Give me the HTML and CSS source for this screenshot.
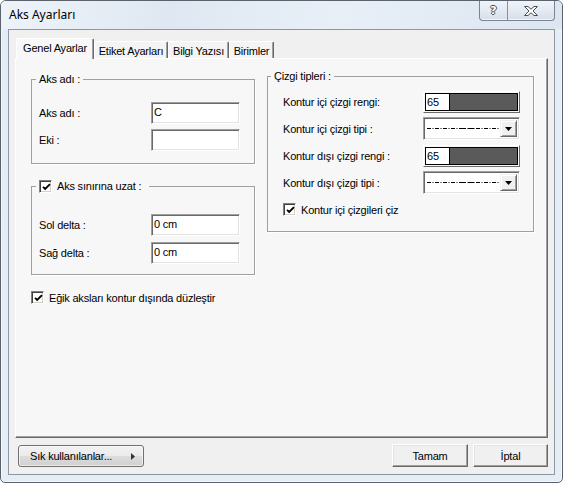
FILE: index.html
```html
<!DOCTYPE html>
<html lang="tr">
<head>
<meta charset="utf-8">
<title>Aks Ayarları</title>
<link rel="stylesheet" href="styles.css">
</head>
<body>
<div class="window">
  <div class="titlebar">
    <span class="title">Aks Ayarları</span>
    <div class="caption-btns">
      <span class="cap-btn help">?</span>
      <span class="cap-btn close">
        <svg width="16" height="10" viewBox="0 0 16 10"><path d="M1.5 0.5 H5 L8 3.2 L11 0.5 H14.5 L10 5 L14.5 9.5 H11 L8 6.8 L5 9.5 H1.5 L6 5 Z" fill="#fdfdfd" stroke="#4a4f57" stroke-width="1" stroke-linejoin="round"/></svg>
      </span>
    </div>
  </div>
  <div class="client">
    <div class="tabs">
      <div class="tab active t1">Genel Ayarlar</div>
      <div class="tab t2">Etiket Ayarları</div>
      <div class="tab t3">Bilgi Yazısı</div>
      <div class="tab t4">Birimler</div>
    </div>
    <div class="panel">
      <div class="col-left">
        <fieldset class="group g1">
          <legend>Aks adı :</legend>
          <div class="form-grid g-left">
            <span class="lbl">Aks adı :</span>
            <div class="input">C</div>
            <span class="lbl">Eki :</span>
            <div class="input"></div>
          </div>
        </fieldset>
        <fieldset class="group g2">
          <legend class="legend-chk"><span class="chk"><svg width="9" height="9" viewBox="0 0 9 9"><polyline points="1,3.8 3.2,6 8,1.2" fill="none" stroke="#000" stroke-width="1.9"/></svg></span><span>Aks sınırına uzat :</span></legend>
          <div class="form-grid g-left rows6">
            <span class="lbl">Sol delta :</span>
            <div class="input">0 cm</div>
            <span class="lbl">Sağ delta :</span>
            <div class="input">0 cm</div>
          </div>
        </fieldset>
        <div class="chk-row egik">
          <span class="chk"><svg width="9" height="9" viewBox="0 0 9 9"><polyline points="1,3.8 3.2,6 8,1.2" fill="none" stroke="#000" stroke-width="1.9"/></svg></span>
          <span>Eğik aksları kontur dışında düzleştir</span>
        </div>
      </div>
      <div class="col-right">
        <fieldset class="group g3">
          <legend>Çizgi tipleri :</legend>
          <div class="form-grid g-right">
            <span class="lbl">Kontur içi çizgi rengi:</span>
            <div class="color"><div class="color-in"><span class="color-txt">65</span><span class="swatch"></span></div></div>
            <span class="lbl">Kontur içi çizgi tipi :</span>
            <div class="combo">
              <span class="combo-val"><svg width="72" height="3" viewBox="0 0 72 3"><line x1="0" y1="1.5" x2="72" y2="1.5" stroke="#000" stroke-width="1" stroke-dasharray="4 1.5 1 1.5 4 1.5 1 1.5 4 1.5 1 1.5 4 1.5 1 1.5 7 1.5 7 1.5 4 1.5 1 1.5 4 1.5 1 1.5"/></svg></span>
              <span class="combo-btn"><svg width="7" height="4" viewBox="0 0 7 4"><polygon points="0,0 7,0 3.5,4" fill="#000"/></svg></span>
            </div>
            <span class="lbl">Kontur dışı çizgi rengi :</span>
            <div class="color"><div class="color-in"><span class="color-txt">65</span><span class="swatch"></span></div></div>
            <span class="lbl">Kontur dışı çizgi tipi :</span>
            <div class="combo">
              <span class="combo-val"><svg width="72" height="3" viewBox="0 0 72 3"><line x1="0" y1="1.5" x2="72" y2="1.5" stroke="#000" stroke-width="1" stroke-dasharray="4 1.5 1 1.5 4 1.5 1 1.5 4 1.5 1 1.5 4 1.5 1 1.5 7 1.5 7 1.5 4 1.5 1 1.5 4 1.5 1 1.5"/></svg></span>
              <span class="combo-btn"><svg width="7" height="4" viewBox="0 0 7 4"><polygon points="0,0 7,0 3.5,4" fill="#000"/></svg></span>
            </div>
          </div>
          <div class="chk-row ic">
            <span class="chk"><svg width="9" height="9" viewBox="0 0 9 9"><polyline points="1,3.8 3.2,6 8,1.2" fill="none" stroke="#000" stroke-width="1.9"/></svg></span>
            <span>Kontur içi çizgileri çiz</span>
          </div>
        </fieldset>
      </div>
    </div>
    <div class="buttons">
      <div class="btn-fav"><span>Sık kullanılanlar...</span><svg width="4" height="7" viewBox="0 0 4 7"><polygon points="0,0 4,3.5 0,7" fill="#333"/></svg></div>
      <div class="spacer"></div>
      <div class="btn btn-ok">Tamam</div>
      <div class="btn btn-cancel">İptal</div>
    </div>
  </div>
</div>
</body>
</html>
```
FILE: styles.css
```css
* { box-sizing: border-box; }
html, body { margin: 0; padding: 0; }
body {
  background: #ffffff;
  width: 563px;
  height: 483px;
  overflow: hidden;
  font-family: "Liberation Sans", Arial, sans-serif;
  font-size: 11px;
  letter-spacing: -0.2px;
  color: #000;
}
.window {
  width: 563px;
  height: 483px;
  border: 1px solid #5c626b;
  border-radius: 6px 6px 5px 5px;
  background: linear-gradient(180deg, #dbe6f1 0%, #e4ecf5 6%, #e6edf5 100%);
  box-shadow: inset 0 0 0 1px rgba(255,255,255,0.55);
  display: flex;
  flex-direction: column;
}
.titlebar {
  height: 28px;
  flex: none;
  display: flex;
  justify-content: space-between;
  align-items: flex-start;
  background: linear-gradient(100deg, #eef3f9 0%, #dfe8f2 30%, #e8eff7 60%, #dce6f1 100%);
  border-radius: 5px 5px 0 0;
}
.title {
  font-family: "Noto Sans", "Open Sans", sans-serif;
  font-size: 12px;
  letter-spacing: 0;
  line-height: 16px;
  margin: 6px 0 0 8px;
  color: #000;
}
.caption-btns {
  display: flex;
  margin-right: 7px;
  height: 20px;
  border: 1px solid #7d838d;
  border-top: none;
  border-radius: 0 0 4px 4px;
  background: linear-gradient(180deg, #f0f4f9 0%, #e3eaf2 50%, #d6dfea 100%);
  box-shadow: inset 0 -1px 0 rgba(255,255,255,0.7);
  overflow: hidden;
}
.cap-btn {
  display: flex;
  align-items: center;
  justify-content: center;
  height: 19px;
}
.help {
  width: 27px;
  font-family: "DejaVu Sans", sans-serif;
  font-weight: bold;
  font-size: 11px;
  color: #fff;
  letter-spacing: 0;
  text-shadow: 1px 0 0 #4a4f57, -1px 0 0 #4a4f57, 0 1px 0 #4a4f57, 0 -1px 0 #4a4f57;
}
.close {
  width: 47px;
  border-left: 1px solid #8a909a;
}
.client {
  flex: 1;
  margin: 0 7px 7px 7px;
  border: 1px solid #8e98a4;
  background: #f0f0f0;
  padding: 8px 6px 0 6px;
  display: flex;
  flex-direction: column;
}
.tabs {
  display: flex;
  align-items: flex-end;
  height: 20px;
  padding-left: 1px;
  position: relative;
  z-index: 2;
}
.tab {
  height: 17px;
  flex: none;
  background: #f4f4f4;
  border-top: 1px solid #fff;
  border-left: 1px solid #fff;
  border-right: 1px solid #696969;
  box-shadow: inset -1px 0 0 #a0a0a0;
  border-radius: 2px 2px 0 0;
  display: flex;
  align-items: center;
  justify-content: center;
  padding-top: 1px;
}
.tab.active {
  height: 21px;
  margin-bottom: -1px;
  background: #f7f7f7;
  padding-top: 0;
  padding-bottom: 2px;
  position: relative;
  z-index: 3;
}
.t1 { width: 78px; }
.t2 { width: 74px; }
.t3 { width: 61px; }
.t4 { width: 45px; }
.panel {
  height: 380px;
  flex: none;
  background: #f7f7f7;
  border: 1px solid;
  border-color: #fff #696969 #696969 #fff;
  box-shadow: inset -1px -1px 0 #a0a0a0;
  display: flex;
  align-items: flex-start;
  padding-left: 15px;
  gap: 12px;
}
.col-left {
  width: 224px;
  margin-top: 14px;
  display: flex;
  flex-direction: column;
}
.col-right {
  width: 267px;
  margin-top: 11px;
}
.group {
  margin: 0;
  min-width: 0;
  width: 100%;
  border: 1px solid #a0a0a0;
  box-shadow: 1px 1px 0 #fff;
  padding: 0;
}
.group legend {
  line-height: 13px;
  padding: 0 3px;
  margin-left: -3px;
}
.g1 { padding: 16px 0 12px 7px; }
.g2 { padding: 21px 0 10px 7px; margin-top: 16px; }
.g3 { padding: 7px 0 15px 15px; }
.g3 legend { margin-left: -12px; }
.legend-chk {
  display: flex;
  align-items: center;
  gap: 5px;
  padding-right: 8px !important;
}
.form-grid {
  display: grid;
  align-items: center;
}
.g-left {
  grid-template-columns: 112px 89px;
  grid-auto-rows: 22px;
  row-gap: 5px;
}
.g-left.rows6 { row-gap: 6px; }
.g-right {
  grid-template-columns: 140px 97px;
  grid-auto-rows: 23px;
  row-gap: 4px;
}
.lbl { white-space: nowrap; }
.input {
  height: 22px;
  background: #fff;
  border: 1px solid;
  border-color: #a0a0a0 #fff #fff #a0a0a0;
  box-shadow: inset 1px 1px 0 #696969, inset -1px -1px 0 #e3e3e3;
  padding: 3px 0 0 2px;
  line-height: 13px;
}
.color {
  height: 22px;
  border: 1px solid;
  border-color: #fff #6a6a6a #6a6a6a #fff;
  padding: 1px;
}
.color-in {
  height: 100%;
  border: 1px solid #000;
  display: flex;
  background: #fff;
}
.color-txt {
  width: 23px;
  padding-left: 1px;
  line-height: 16px;
}
.swatch {
  flex: 1;
  background: #5a5a5a;
  border-left: 1px solid #000;
}
.combo {
  height: 23px;
  background: #fff;
  border: 1px solid;
  border-color: #a0a0a0 #fff #fff #a0a0a0;
  box-shadow: inset 1px 1px 0 #696969, inset -1px -1px 0 #e3e3e3;
  padding: 2px;
  display: flex;
}
.combo-val {
  flex: 1;
  display: flex;
  align-items: center;
  padding-left: 1px;
}
.combo-val svg { display: block; }
.combo-btn {
  width: 17px;
  background: #f0f0f0;
  border: 1px solid;
  border-color: #f0f0f0 #696969 #696969 #f0f0f0;
  box-shadow: inset 1px 1px 0 #fff, inset -1px -1px 0 #a0a0a0;
  display: flex;
  align-items: center;
  justify-content: center;
}
.chk {
  width: 13px;
  height: 13px;
  flex: none;
  background: #fff;
  border: 1px solid;
  border-color: #808080 #fff #fff #808080;
  box-shadow: inset 1px 1px 0 #404040, inset -1px -1px 0 #d4d0c8;
  display: flex;
  align-items: center;
  justify-content: center;
  padding: 1px 0 0 1px;
}
.chk svg { display: block; }
.chk-row {
  display: flex;
  align-items: center;
  gap: 5px;
  height: 13px;
}
.egik { margin-top: 16px; }
.ic { margin-top: 9px; }
.buttons {
  display: flex;
  align-items: flex-start;
  margin-top: 6px;
}
.btn-fav {
  margin-left: 3px;
  margin-top: 1px;
  width: 126px;
  height: 22px;
  border: 1px solid #707070;
  border-radius: 3px;
  background: linear-gradient(180deg, #f2f2f2 0%, #ebebeb 48%, #dddddd 52%, #cfcfcf 100%);
  box-shadow: inset 0 0 0 1px rgba(255,255,255,0.6);
  display: flex;
  align-items: center;
  justify-content: space-between;
  padding: 0 8px 0 11px;
}
.spacer { flex: 1; }
.btn {
  height: 23px;
  background: #f0f0f0;
  border: 1px solid;
  border-color: #fff #696969 #696969 #fff;
  box-shadow: inset -1px -1px 0 #a0a0a0, inset 1px 1px 0 #e3e3e3;
  display: flex;
  align-items: center;
  justify-content: center;
}
.btn-ok { width: 76px; margin-right: 5px; }
.btn-cancel { width: 75px; }
```
